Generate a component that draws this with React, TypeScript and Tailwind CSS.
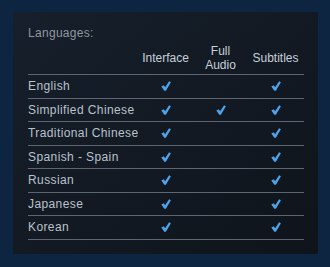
import React from 'react';

const languages: { name: string; iface: boolean; audio: boolean; subs: boolean }[] = [
  { name: 'English', iface: true, audio: false, subs: true },
  { name: 'Simplified Chinese', iface: true, audio: true, subs: true },
  { name: 'Traditional Chinese', iface: true, audio: false, subs: true },
  { name: 'Spanish - Spain', iface: true, audio: false, subs: true },
  { name: 'Russian', iface: true, audio: false, subs: true },
  { name: 'Japanese', iface: true, audio: false, subs: true },
  { name: 'Korean', iface: true, audio: false, subs: true },
];

const Check: React.FC = () => (
  <svg width="10" height="10" viewBox="0 0 10 10" className="block">
    <path d="M0.3 5.4 L2.8 4.2 L4.1 6.3 L8.1 0.2 L9.9 1.2 L4.9 9.8 L3.3 9.8 Z" fill="#4da3ec" />
  </svg>
);

const Cell: React.FC<{ on: boolean }> = ({ on }) => (
  <div className="flex items-center justify-center">{on && <Check />}</div>
);

export default function App() {
  return (
    <div
      className="w-[330px] h-[267px] bg-[#0e2541] pt-[12px] pl-[13px]"
      style={{ fontFamily: '"Liberation Sans", Arial, sans-serif' }}
    >
      <div className="w-[305px] h-[242px] bg-gradient-to-br from-[#161f2b] to-[#0f141b] pl-[15px] pr-[14px] pt-[14px]">
        <div className="text-[12px] leading-[14px] text-[#8f98a0] tracking-[0.3px]">Languages:</div>
        <div className="mt-[4px] grid grid-cols-[110px_55px_55px_55px] text-[12px] leading-[14px] text-[#c6d0da] border-b border-[#5c6570] pb-[2px]">
          <div />
          <div className="flex items-end justify-center pb-[7px]">Interface</div>
          <div className="text-center">Full<br />Audio</div>
          <div className="flex items-end justify-center pb-[7px]">Subtitles</div>
        </div>
        {languages.map((l) => (
          <div
            key={l.name}
            className="grid grid-cols-[110px_55px_55px_55px] h-[23.5px] border-b border-[#5c6570] text-[12px] leading-[14px] text-[#b9c2cb] tracking-[0.4px]"
          >
            <div className="flex items-center whitespace-nowrap">{l.name}</div>
            <Cell on={l.iface} />
            <Cell on={l.audio} />
            <Cell on={l.subs} />
          </div>
        ))}
      </div>
    </div>
  );
}
